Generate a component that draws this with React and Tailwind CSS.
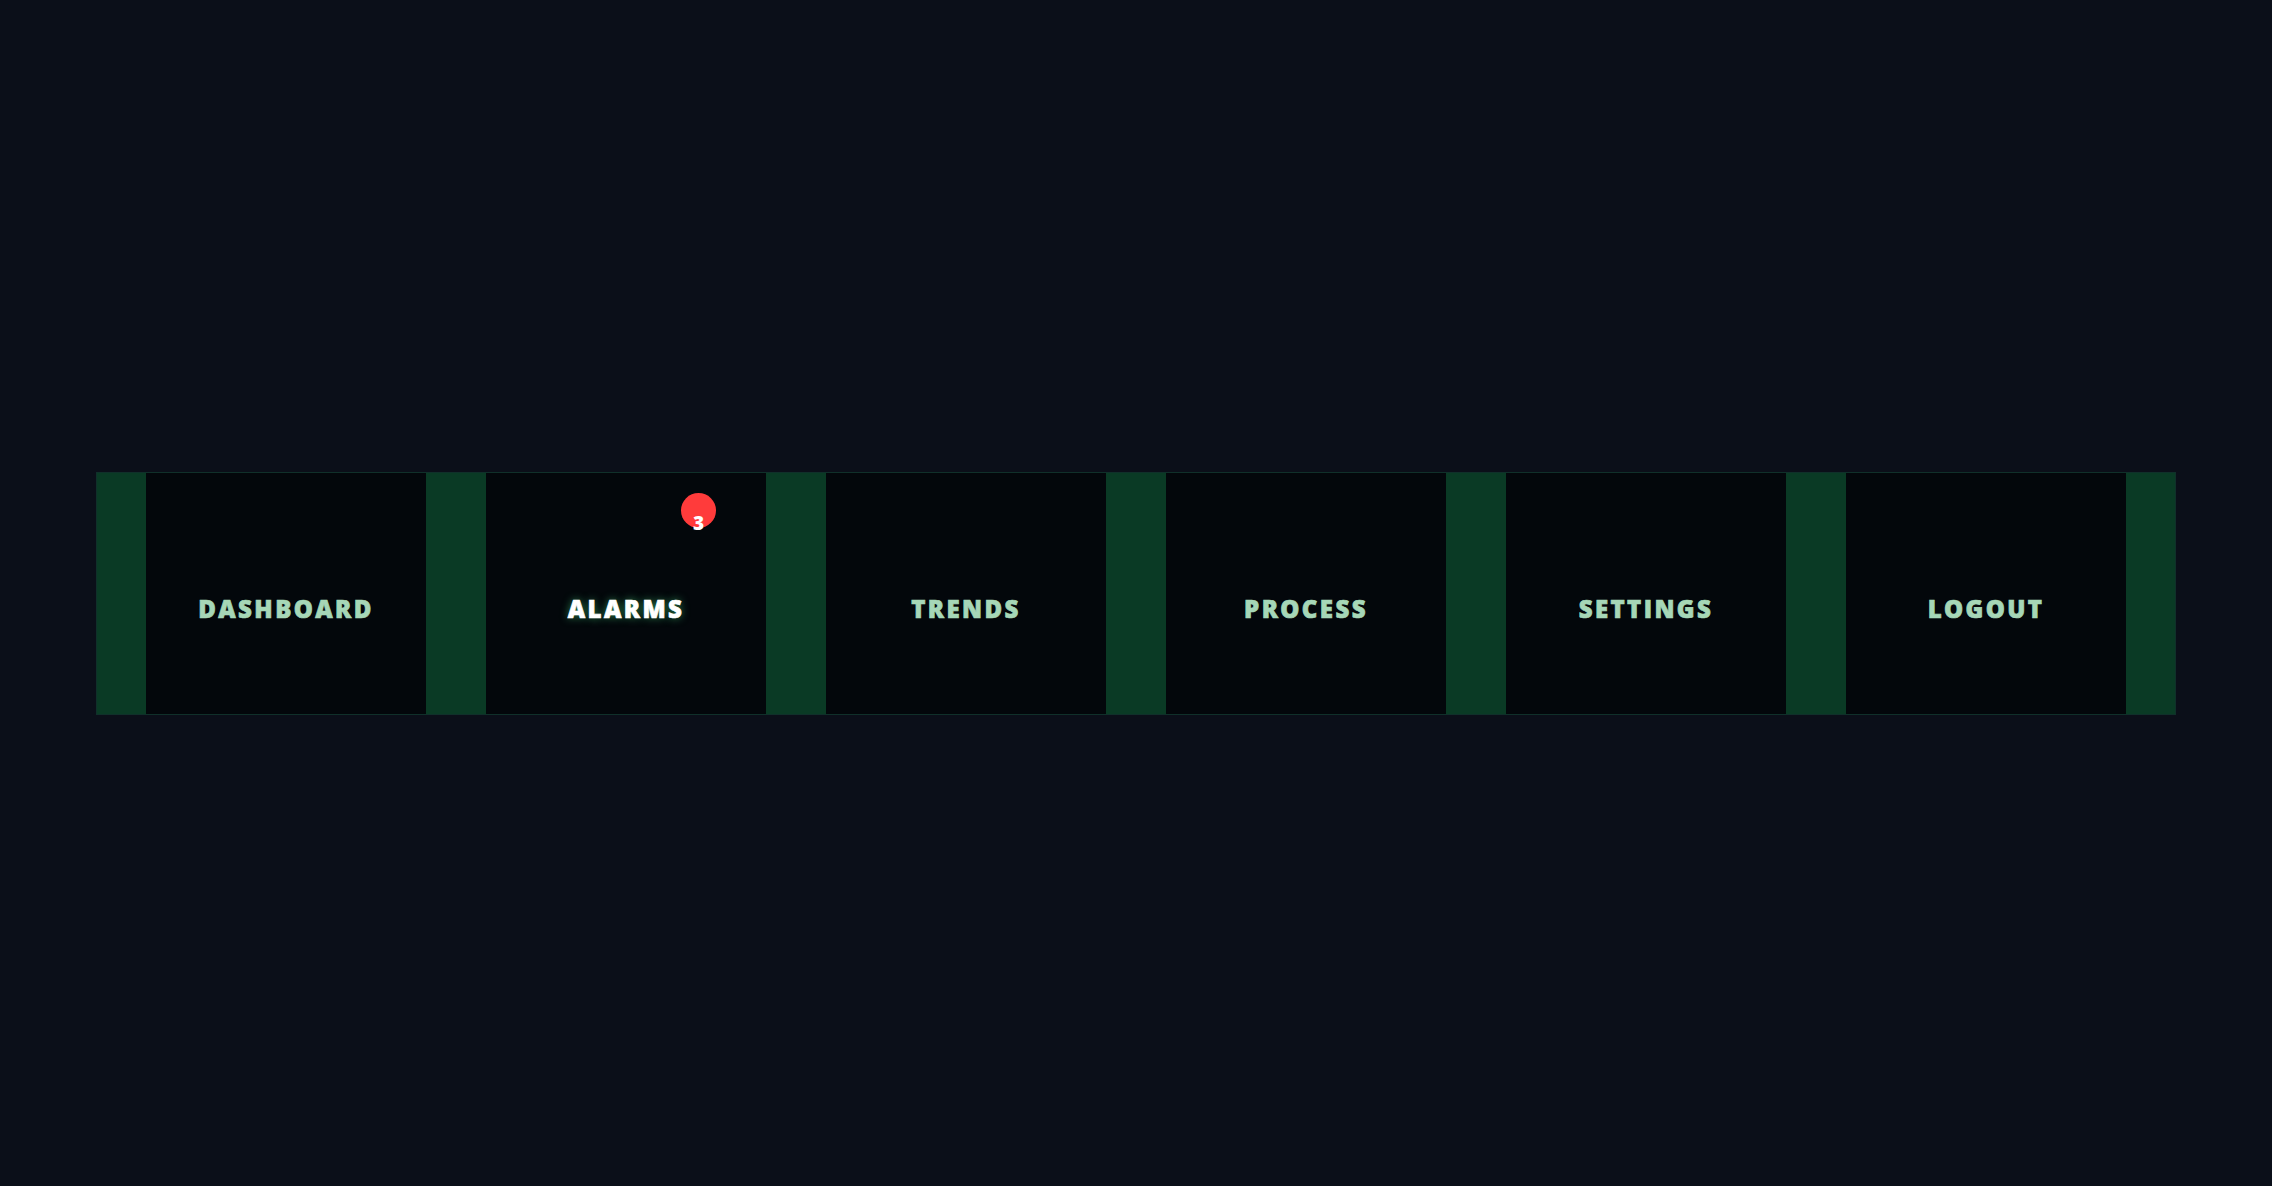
import React from "react";

const items = [
  { label: "DASHBOARD" },
  { label: "ALARMS", active: true, badge: 3 },
  { label: "TRENDS" },
  { label: "PROCESS" },
  { label: "SETTINGS" },
  { label: "LOGOUT" },
];

export default function App() {
  return (
    <div
      className="w-full h-[1186px] bg-[#0b0f19] flex items-center justify-center"
      style={{ fontFamily: '"Open Sans", "Noto Sans", sans-serif' }}
    >
      <nav className="w-[2080px] h-[243px] border border-[#10302a] bg-[#0a3a25] px-[49px] flex gap-[60px]">
        {items.map((it) => (
          <div
            key={it.label}
            className="relative w-[280px] h-full bg-[#03070b] flex items-center justify-center pt-[32px]"
          >
            <span
              className={
                it.active
                  ? "text-[24px] font-black tracking-[0.1em] text-white [-webkit-text-stroke:0.7px_currentColor] [text-shadow:0_0_8px_rgba(74,222,128,0.6)]"
                  : "text-[24px] font-black tracking-[0.1em] text-[#a6d7b7] [-webkit-text-stroke:0.7px_currentColor]"
              }
            >
              {it.label}
            </span>
            {it.badge ? (
              <div className="absolute left-[195px] top-[20px] w-[35px] h-[35px] rounded-full bg-[#ff3b3b] text-center pt-[21px] leading-none text-[19px] font-extrabold text-white">
                {it.badge}
              </div>
            ) : null}
          </div>
        ))}
      </nav>
    </div>
  );
}
